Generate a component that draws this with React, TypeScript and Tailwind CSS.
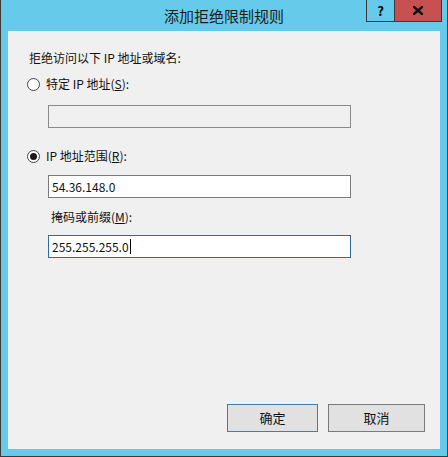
const font = { fontFamily: '"Noto Sans CJK SC", "Noto Sans", sans-serif' };

const Radio = ({ checked }: { checked?: boolean }) => (
  <span className="w-[13px] h-[13px] rounded-full border border-[#444] bg-white flex items-center justify-center shrink-0">
    {checked && <span className="w-[7px] h-[7px] rounded-full bg-[#1a1a1a]" />}
  </span>
);

export default function App() {
  return (
    <div
      className="w-[448px] h-[457px] bg-[#66cbea] border-l border-r border-b border-[#3a3a3a] flex flex-col text-[#111]"
      style={font}
    >
      {/* Title bar */}
      <div className="relative h-[31px] shrink-0 flex items-center justify-center">
        <span className="text-[15px] leading-none text-[#1b1b1b] -mt-[1px]">添加拒绝限制规则</span>
        <div className="absolute top-0 right-[5px] flex h-[22px]">
          <div className="w-[29px] h-full border border-t-0 border-[#3a3a3a] flex items-center justify-center text-[13px] font-bold text-black">
            ?
          </div>
          <div className="w-[47px] h-full border border-t-0 border-l-0 border-[#3a3a3a] bg-[#c75050] flex items-center justify-center">
            <svg width="10" height="9" viewBox="0 0 10 9">
              <path d="M1 1 L9 8 M9 1 L1 8" stroke="#111" strokeWidth="2.4" strokeLinecap="square" />
            </svg>
          </div>
        </div>
      </div>

      {/* Client area */}
      <div className="ml-[7px] w-[432px] h-[418px] bg-[#f0f0f0] flex flex-col text-[12px] leading-[16px]">
        <div className="mt-[19px] ml-[21px]">拒绝访问以下 IP 地址或域名:</div>

        <div className="mt-[10px] ml-[19px] flex items-center gap-[6px] h-[16px]">
          <Radio />
          <span>
            特定 IP 地址(<span className="underline">S</span>):
          </span>
        </div>
        <div className="mt-[13px] ml-[40px] w-[303px] h-[23px] border border-[#8a8a8a] bg-[#f0f0f0]" />

        <div className="mt-[20px] ml-[19px] flex items-center gap-[6px] h-[16px]">
          <Radio checked />
          <span>
            IP 地址范围(<span className="underline">R</span>):
          </span>
        </div>
        <div className="mt-[11px] ml-[40px] w-[303px] h-[23px] border border-[#7a7a7a] bg-white flex items-center pl-[3px]">
          54.36.148.0
        </div>

        <div className="mt-[11px] ml-[43px]">
          掩码或前缀(<span className="underline">M</span>):
        </div>
        <div className="mt-[10px] ml-[40px] w-[303px] h-[23px] border border-[#2f6aa0] bg-white flex items-center pl-[3px]">
          255.255.255.0
          <span className="w-px h-[15px] bg-black ml-px" />
        </div>

        <div className="mt-auto mb-[17px] ml-[219px] flex gap-[10px]">
          <button className="w-[91px] h-[28px] border border-[#3c7fb1] bg-[#e1e1e1] text-[13px]">确定</button>
          <button className="w-[97px] h-[28px] border border-[#7a7a7a] bg-[#e1e1e1] text-[13px]">取消</button>
        </div>
      </div>
    </div>
  );
}
